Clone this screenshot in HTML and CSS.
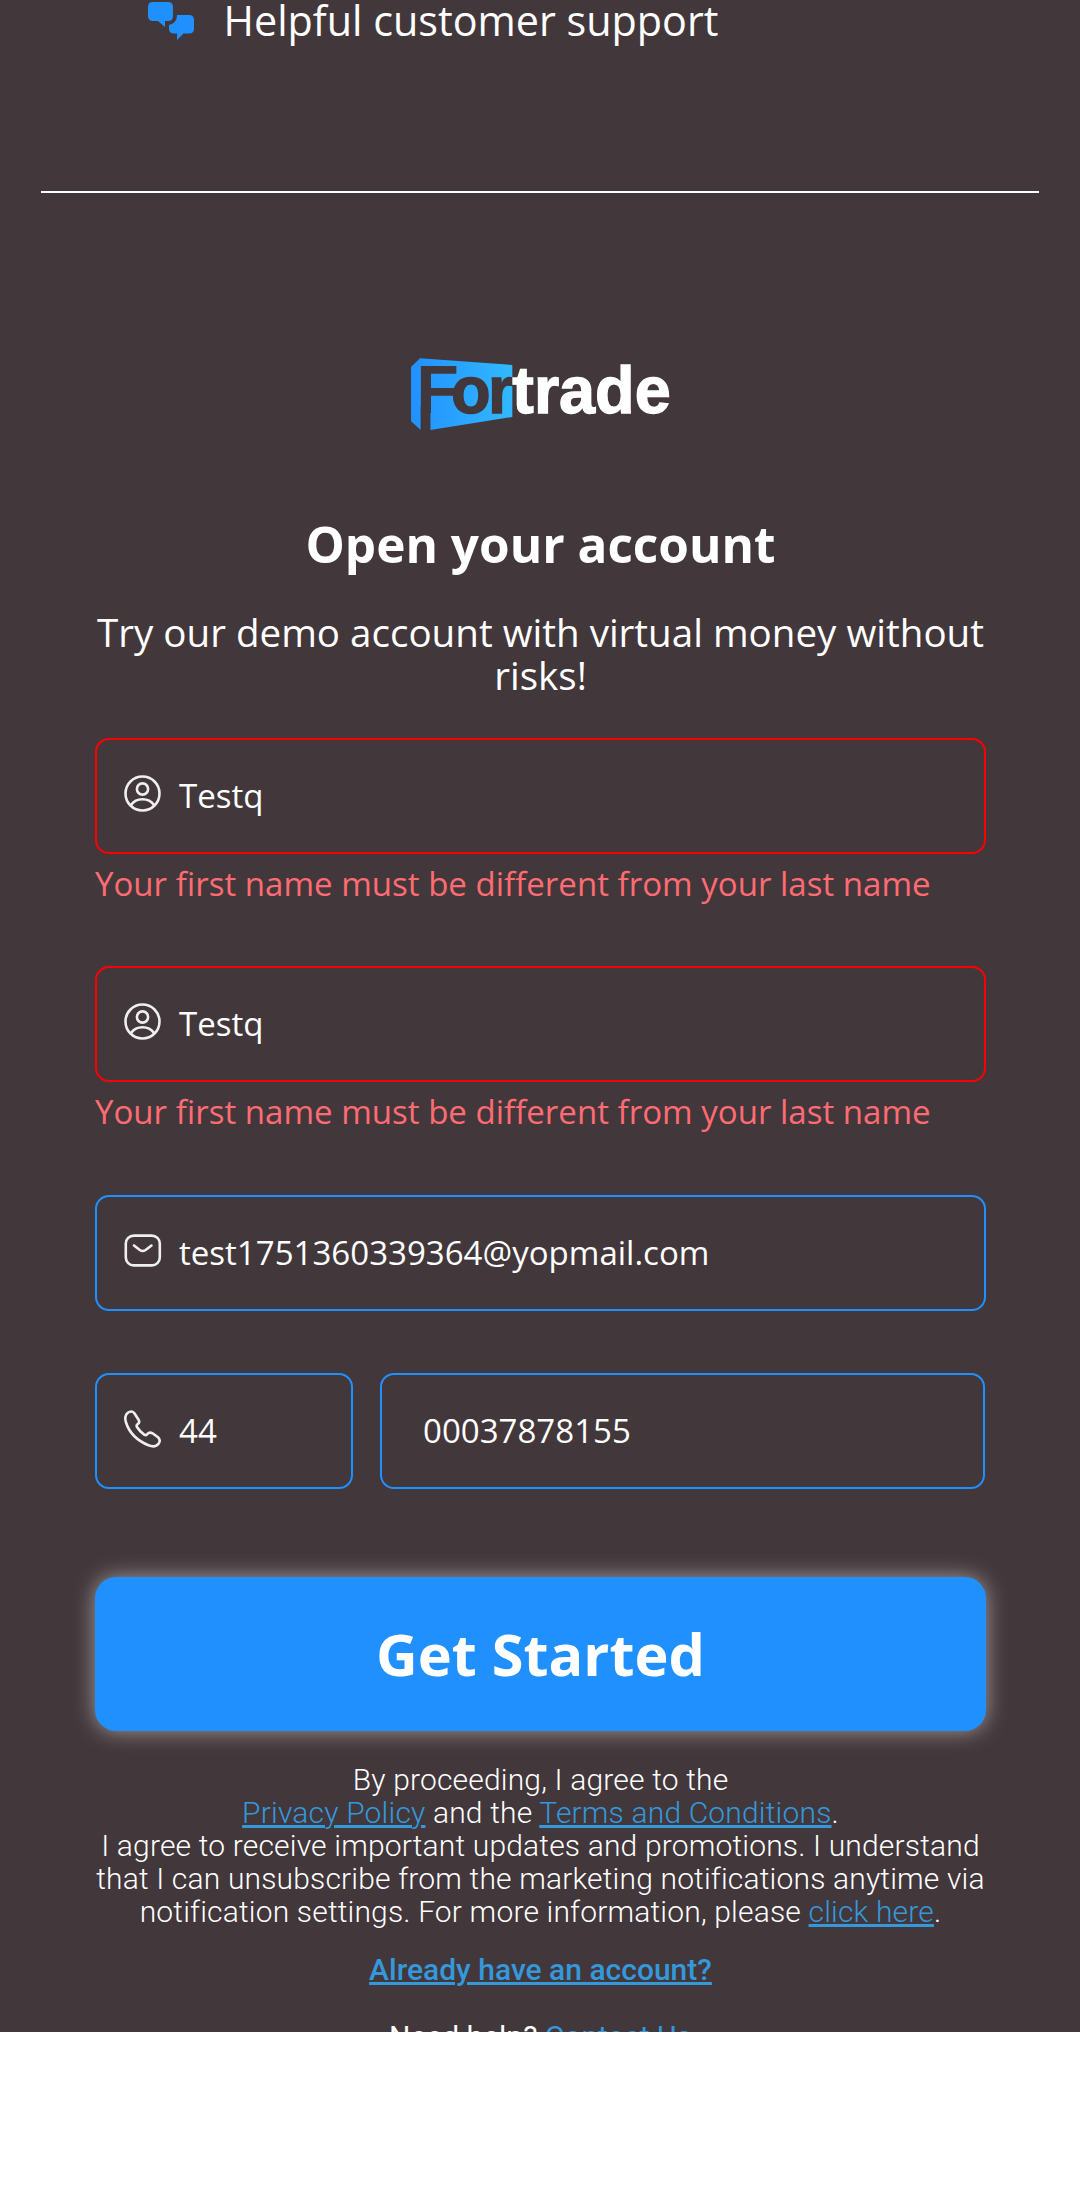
FILE: index.html
```html
<!DOCTYPE html>
<html lang="en">
<head>
<meta charset="utf-8">
<title>Fortrade</title>
<link rel="stylesheet" href="styles.css">
</head>
<body>
<main class="page">
  <div class="feature">
    <svg class="feature-icon" viewBox="148 2 46 38" width="46" height="38"><path d="M153 2H168Q173 2 173 7V16Q173 21 168 21H165V27L158 21H153Q148 21 148 16V7Q148 2 153 2ZM177 15H189Q194 15 194 20V28.500Q194 33.500 189 33.500H183.500L177 40V33.500H174Q169 33.500 169 28.500V25Q177 23 177 15Z"/></svg>
    <span class="feature-text">Helpful customer support</span>
  </div>
  <hr class="divider">
  <svg class="logo" viewBox="60 50 780 222" width="260" height="74">
    <defs><linearGradient id="g"><stop offset="0" stop-color="#2190ff"/><stop offset="1" stop-color="#31b9ff"/></linearGradient></defs>
    <path fill="url(#g)" d="M63 80 90 54 367 74V230L121 269V200H92V269L63 243Z"/>
    <path class="dark" d="M94 150H120V271H94Z"/>
    <text class="logo-text logo-initial dark" x="78.500" y="218" textLength="128" lengthAdjust="spacingAndGlyphs">F</text>
    <text class="logo-text dark" x="183" y="217" textLength="119" lengthAdjust="spacingAndGlyphs">o</text>
    <text class="logo-text dark" x="294" y="217" textLength="76" lengthAdjust="spacingAndGlyphs">r</text>
    <text class="logo-text light" x="367" y="217" textLength="475" lengthAdjust="spacingAndGlyphs">trade</text>
  </svg>
  <form class="form">
    <h1 class="title">Open your account</h1>
    <p class="subtitle">Try our demo account with virtual money without risks!</p>
    <div class="field invalid">
      <svg class="icon" viewBox="0 0 38 38"><circle cx="18.500" cy="18.500" r="17"/><circle cx="18.500" cy="14" r="5.600"/><path d="M7 30Q11 24.300 18.500 24.300T30 30"/></svg>
      <span class="value">Testq</span>
    </div>
    <p class="error">Your first name must be different from your last name</p>
    <div class="field invalid">
      <svg class="icon" viewBox="0 0 38 38"><circle cx="18.500" cy="18.500" r="17"/><circle cx="18.500" cy="14" r="5.600"/><path d="M7 30Q11 24.300 18.500 24.300T30 30"/></svg>
      <span class="value">Testq</span>
    </div>
    <p class="error">Your first name must be different from your last name</p>
    <div class="field email">
      <svg class="icon" viewBox="0 0 38 38"><rect x="1.800" y="3.600" width="34" height="29.800" rx="8"/><path d="M10 13.500 15.800 18Q18.700 20 21.600 18L27.500 13.500"/></svg>
      <span class="value">test1751360339364@yopmail.com</span>
    </div>
    <div class="phone-row">
      <div class="field code">
        <svg class="icon" viewBox="0 0 38 38"><path d="M3.500 3Q7.500 0 10.200 3L14.700 10Q16 12.800 13.700 14Q12 15.200 13 17Q16 22 20.500 24.800Q22 25.500 23 24.300Q25.500 21.600 28.500 23.300L34 27.300Q37 30 34.700 33.500Q31.500 38 24.500 35.300Q7 28 2 12.500Q0 6 3.500 3Z"/></svg>
        <span class="value">44</span>
      </div>
      <div class="field number"><span class="value">00037878155</span></div>
    </div>
    <button class="submit" type="button">Get Started</button>
    <p class="terms">By proceeding, I agree to the<br><a>Privacy Policy</a> and the <a>Terms and Conditions</a>.<br>I agree to receive important updates and promotions. I understand that I can unsubscribe from the marketing notifications anytime via notification settings. For more information, please <a>click here</a>.</p>
    <p class="login"><a>Already have an account?</a></p>
    <p class="help">Need help? <a>Contact Us</a></p>
  </form>
</main>
</body>
</html>
```
FILE: styles.css
```css
* { box-sizing: border-box; }
body { margin: 0; background: #fff; }
.page {
  height: 2032px;
  overflow: hidden;
  background: #42373b;
  color: #fff;
  font-family: "Open Sans", sans-serif;
}
.feature { display: flex; align-items: flex-start; height: 191px; padding: 2px 0 0 148px; }
.feature-icon { flex: none; fill: #2190ff; }
.feature-text { margin: -10px 0 0 29.5px; font-size: 41.3px; line-height: 56px; white-space: nowrap; }
.divider { height: 2px; margin: 0 41px; border: 0; background: #fff; }
.logo { display: block; margin: 164px auto 0; }
.logo-text { font: bold 198px "Liberation Sans", sans-serif; stroke-width: 4px; }
.logo-initial { stroke-width: 0; font-size: 206px; }
.dark { fill: #42373b; stroke: #42373b; }
.light { fill: #fff; stroke: #fff; }
.form { width: 891px; margin: 0 auto 0 95px; }
.title { margin: 79px 0 0; font-size: 49.5px; line-height: 68px; font-weight: 700; text-align: center; }
.subtitle { margin: 33px -5px 0; font-size: 38.55px; line-height: 43px; text-align: center; }
.field {
  display: flex;
  align-items: center;
  height: 116px;
  padding-left: 27px;
  border: 2px solid #2190ff;
  border-radius: 14px;
}
.subtitle + .field { margin-top: 41px; }
.invalid { border-color: #f00; }
.icon { flex: none; width: 38px; height: 38px; margin: -5px 17px 0 0; fill: none; stroke: #efefef; stroke-width: 2.6; stroke-linecap: round; stroke-linejoin: round; }
.value { margin-top: -1px; font-size: 33.05px; line-height: 45px; white-space: nowrap; }
.error { margin: 7px 0 60px; color: #ff6b72; font-size: 33.05px; line-height: 45px; white-space: nowrap; }
.email { margin-top: 61px; }
.phone-row { display: grid; grid-template-columns: 258px 1fr; gap: 27px; margin: 62px 1px 0 0; }
.number { padding-left: 41px; }
.submit {
  display: block;
  width: 100%;
  height: 154px;
  margin-top: 88px;
  padding: 0 0 2px;
  border: 0;
  border-radius: 21px;
  background: #2190ff;
  box-shadow: 0 0 22px rgba(255, 255, 255, .5);
  color: #fff;
  font: 700 57.6px "Open Sans", sans-serif;
}
.terms, .login, .help { font-family: Roboto, sans-serif; font-size: 30px; line-height: 33px; text-align: center; }
.terms { margin: 32px -4px 0; font-weight: 300; letter-spacing: .17px; }
.login { margin: 25px 0 0; font-weight: 500; }
.help { margin: 34px 0 0; font-weight: 400; }
a { color: #3498db; text-decoration: underline; }
```
